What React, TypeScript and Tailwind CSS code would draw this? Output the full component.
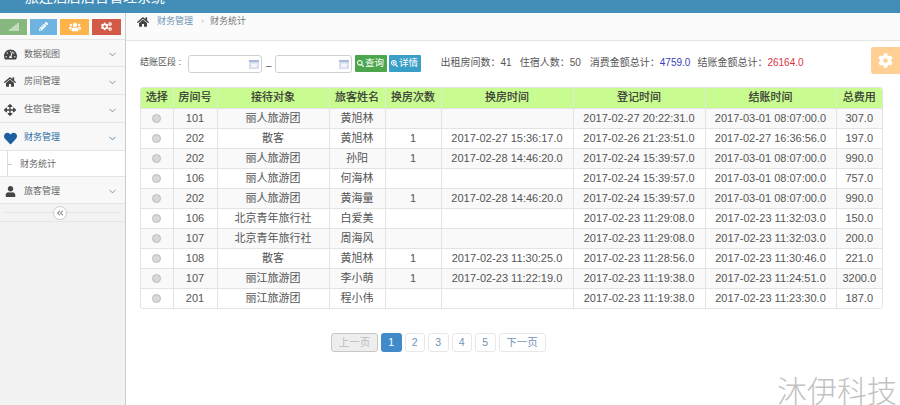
import type { ReactNode } from "react";
import { ChevronDown } from "lucide-react";
import {
  FaAngleDoubleLeft,
  FaArrowsAlt,
  FaCog,
  FaCogs,
  FaHeart,
  FaHome,
  FaPencilAlt,
  FaSearch,
  FaSearchPlus,
  FaSignal,
  FaTachometerAlt,
  FaUser,
  FaUsers,
} from "react-icons/fa";

const rows = [
  ["101", "丽人旅游团", "黄旭林", "", "", "2017-02-27 20:22:31.0", "2017-03-01 08:07:00.0", "307.0"],
  ["202", "散客", "黄旭林", "1", "2017-02-27 15:36:17.0", "2017-02-26 21:23:51.0", "2017-02-27 16:36:56.0", "197.0"],
  ["202", "丽人旅游团", "孙阳", "1", "2017-02-28 14:46:20.0", "2017-02-24 15:39:57.0", "2017-03-01 08:07:00.0", "990.0"],
  ["106", "丽人旅游团", "何海林", "", "", "2017-02-24 15:39:57.0", "2017-03-01 08:07:00.0", "757.0"],
  ["202", "丽人旅游团", "黄海量", "1", "2017-02-28 14:46:20.0", "2017-02-24 15:39:57.0", "2017-03-01 08:07:00.0", "990.0"],
  ["106", "北京青年旅行社", "白爱美", "", "", "2017-02-23 11:29:08.0", "2017-02-23 11:32:03.0", "150.0"],
  ["107", "北京青年旅行社", "周海风", "", "", "2017-02-23 11:29:08.0", "2017-02-23 11:32:03.0", "200.0"],
  ["108", "散客", "黄旭林", "1", "2017-02-23 11:30:25.0", "2017-02-23 11:28:56.0", "2017-02-23 11:30:46.0", "221.0"],
  ["107", "丽江旅游团", "李小萌", "1", "2017-02-23 11:22:19.0", "2017-02-23 11:19:38.0", "2017-02-23 11:24:51.0", "3200.0"],
  ["201", "丽江旅游团", "程小伟", "", "", "2017-02-23 11:19:38.0", "2017-02-23 11:23:30.0", "187.0"],
];

const headers = ["选择", "房间号", "接待对象", "旅客姓名", "换房次数", "换房时间", "登记时间", "结账时间", "总费用"];

function NavItem({ icon, label, active, short }: { icon: ReactNode; label: string; active?: boolean; short?: boolean }) {
  return (
    <div className={`flex items-center border-b border-[#e5e5e5] bg-[#f8f8f8] pl-[3px] pr-[7px] pt-[3px] ${short ? "h-[27px]" : "h-[28px]"}`}>
      <span className="flex w-[14px] justify-center">{icon}</span>
      <span className={`ml-[7px] flex-1 text-[9px] ${active ? "text-[#2b6ea3]" : "text-[#666]"}`}>{label}</span>
      <ChevronDown className={`size-[11px] ${active ? "text-[#2b6ea3]" : "text-[#777]"}`} strokeWidth={1.75} />
    </div>
  );
}

function DateInput({ width }: { width: string }) {
  return (
    <div className={`flex h-[18px] ${width} items-center justify-end rounded-[3px] border border-[#cfcfcf] bg-white pr-[2px]`}>
      <svg width="10" height="9" viewBox="0 0 10 9">
        <rect width="10" height="9" fill="#d5dcec" />
        <rect width="10" height="2" fill="#a9b9dc" />
        <rect x="2" y="3.5" width="6" height="4" fill="#f2f4fa" />
      </svg>
    </div>
  );
}

export default function App() {
  return (
    <div className="relative flex h-[405px] w-[900px] flex-col overflow-hidden bg-white font-['Liberation_Sans','Noto_Sans_CJK_SC',sans-serif] text-[#555]">
      {/* 顶部 */}
      <div className="h-[13px] shrink-0 overflow-hidden bg-[#438eb9] pl-[8px] text-white">
        <div className="mt-[-10px] flex items-center text-[14px] leading-[14px]">
          <span className="w-[17px] text-[8px]">✦</span>
          <span>旅连酒店后台管理系统</span>
        </div>
      </div>

      <div className="flex flex-1">
        {/* 侧栏 */}
        <div className="w-[126px] shrink-0 border-r border-[#ccc] bg-[#f2f2f2]">
          <div className="flex h-[27px] items-center gap-[3px] border-b border-[#e5e5e5] bg-[#fafafa] pt-[1px]">
            <div className="flex h-[16px] w-[27px] items-center justify-center bg-[#87b87f]"><FaSignal className="size-[10px] text-[#e4efe2]" /></div>
            <div className="flex h-[16px] w-[27px] items-center justify-center bg-[#6fb3e0]"><FaPencilAlt className="size-[9px] text-white" /></div>
            <div className="flex h-[16px] w-[29px] items-center justify-center bg-[#ffb44b]"><FaUsers className="size-[12px] text-white" /></div>
            <div className="flex h-[16px] w-[29px] items-center justify-center bg-[#d15b47]"><FaCogs className="size-[11px] text-white" /></div>
          </div>
          <NavItem short icon={<FaTachometerAlt className="size-[13px] text-[#444]" />} label="数据视图" />
          <NavItem icon={<FaHome className="size-[12px] text-[#444]" />} label="房间管理" />
          <NavItem icon={<FaArrowsAlt className="size-[12px] text-[#444]" />} label="住宿管理" />
          <NavItem icon={<FaHeart className="size-[13px] text-[#1c5ea0]" />} label="财务管理" active />
          <div className="relative flex h-[26px] items-center border-b border-[#e5e5e5] bg-white pl-[20px] pt-[2px] text-[9px] text-[#666]">
            <span className="absolute bottom-0 left-[7px] top-0 border-l border-[#ddd]" />
            <span className="absolute left-[7px] top-[13px] w-[5px] border-t border-[#ccc]" />
            财务统计
          </div>
          <NavItem short icon={<FaUser className="size-[11px] text-[#444]" />} label="旅客管理" />
          <div className="relative flex h-[18px] items-center border-b border-[#e5e5e5] bg-[#f3f3f3] px-[5px]">
            <div className="w-full border-t border-[#e3e3e3]" />
            <span className="absolute left-[53px] top-[2px] flex size-[14px] items-center justify-center rounded-full border border-[#ccc] bg-white">
              <FaAngleDoubleLeft className="size-[8px] text-[#999]" />
            </span>
          </div>
        </div>

        {/* 内容 */}
        <div className="flex min-w-0 flex-1 flex-col">
          <div className="flex h-[28px] items-center border-b border-[#e5e5e5] bg-[#fbfbfb] pl-[11px] pb-[9px] text-[9px]">
            <FaHome className="size-[12px] text-[#444]" />
            <span className="ml-[8px] text-[#6f94b4]">财务管理</span>
            <span className="ml-[8px] text-[#bbb]">›</span>
            <span className="ml-[6px] text-[#777]">财务统计</span>
          </div>

          <div className="pl-[14px] pr-[17px]">
            <div className="relative flex h-[46px] items-center text-[10px] text-[#555]">
              <span className="mb-[3px] w-[48px] text-[9px]">结账区段 :</span>
              <DateInput width="w-[74px]" />
              <span className="ml-[4px] mr-[3px] mt-[3px]">–</span>
              <DateInput width="w-[77px]" />
              <button className="ml-[3px] mb-[1px] flex h-[17px] w-[32px] items-center justify-center gap-[1px] rounded-[1px] bg-[#4ca64c] text-[9.5px] text-white">
                <FaSearch className="size-[7px]" />查询
              </button>
              <button className="ml-[2px] mb-[1px] flex h-[17px] w-[32px] items-center justify-center gap-[1px] rounded-[1px] bg-[#3a9fc7] text-[9.5px] text-white">
                <FaSearchPlus className="size-[7px]" />详情
              </button>
              <div className="mb-[4px] ml-[20px] flex">
                <span>出租房间数：41</span>
                <span className="ml-[8px]">住宿人数：50</span>
                <span className="ml-[9px]">消费金额总计：<span className="text-[#3d3db8]">4759.0</span></span>
                <span className="ml-[7px]">结账金额总计：<span className="text-[#dd3344]">26164.0</span></span>
              </div>
              <span className="absolute right-[-17px] top-[6px] flex h-[27px] w-[29px] items-center justify-center rounded-l-[3px] bg-[#ffcf94]">
                <FaCog className="size-[15px] text-white" />
              </span>
            </div>

            <div className="overflow-hidden rounded-[3px] border border-[#e3e3e3]">
              <table className="w-full table-fixed border-collapse text-[11px]">
                <colgroup>
                  <col className="w-[32px]" />
                  <col className="w-[44px]" />
                  <col className="w-[112px]" />
                  <col className="w-[56px]" />
                  <col className="w-[56px]" />
                  <col className="w-[132px]" />
                  <col className="w-[132px]" />
                  <col className="w-[131px]" />
                  <col className="w-[46px]" />
                </colgroup>
                <thead>
                  <tr className="h-[20px] bg-[#c9fc90]">
                    {headers.map((h) => (
                      <th key={h} className="border-l border-[#dfeccf] p-0 text-center text-[11px] font-normal leading-none text-[#333] [-webkit-text-stroke:0.2px_#333] first:border-l-0">{h}</th>
                    ))}
                  </tr>
                </thead>
                <tbody>
                  {rows.map((r, i) => (
                    <tr key={i} className={`h-[20px] border-t border-[#e3e3e3] ${i % 2 === 0 ? "bg-[#f9f9f9]" : "bg-white"}`}>
                      <td className="p-0 text-center">
                        <span className="mx-auto block size-[9px] rounded-full border border-[#bbb] bg-[#d8d8d8]" />
                      </td>
                      {r.map((c, j) => (
                        <td key={j} className="border-l border-[#e3e3e3] p-0 text-center leading-none">{c}</td>
                      ))}
                    </tr>
                  ))}
                </tbody>
              </table>
            </div>

            <div className="ml-[191px] mt-[24px] flex items-center gap-[3px] text-[10.5px]">
              <span className="flex h-[19px] w-[47px] items-center justify-center rounded-[3px] border border-[#c8c8c8] bg-[#eee] text-[#bbb]">上一页</span>
              <span className="flex h-[19px] w-[20.5px] items-center justify-center rounded-[3px] bg-[#428bca] text-white">1</span>
              {["2", "3", "4", "5"].map((p) => (
                <span key={p} className="flex h-[19px] w-[20.5px] items-center justify-center rounded-[3px] border border-[#e8e8e8] text-[#6f94b4]">{p}</span>
              ))}
              <span className="flex h-[19px] w-[47px] items-center justify-center rounded-[3px] border border-[#e8e8e8] text-[#6f94b4]">下一页</span>
            </div>
          </div>
        </div>
      </div>

      {/* 水印 */}
      <span className="absolute left-[777px] top-[374px] text-[30px] font-light leading-[36px] text-[#c2c2c2]">沐伊科技</span>
    </div>
  );
}
